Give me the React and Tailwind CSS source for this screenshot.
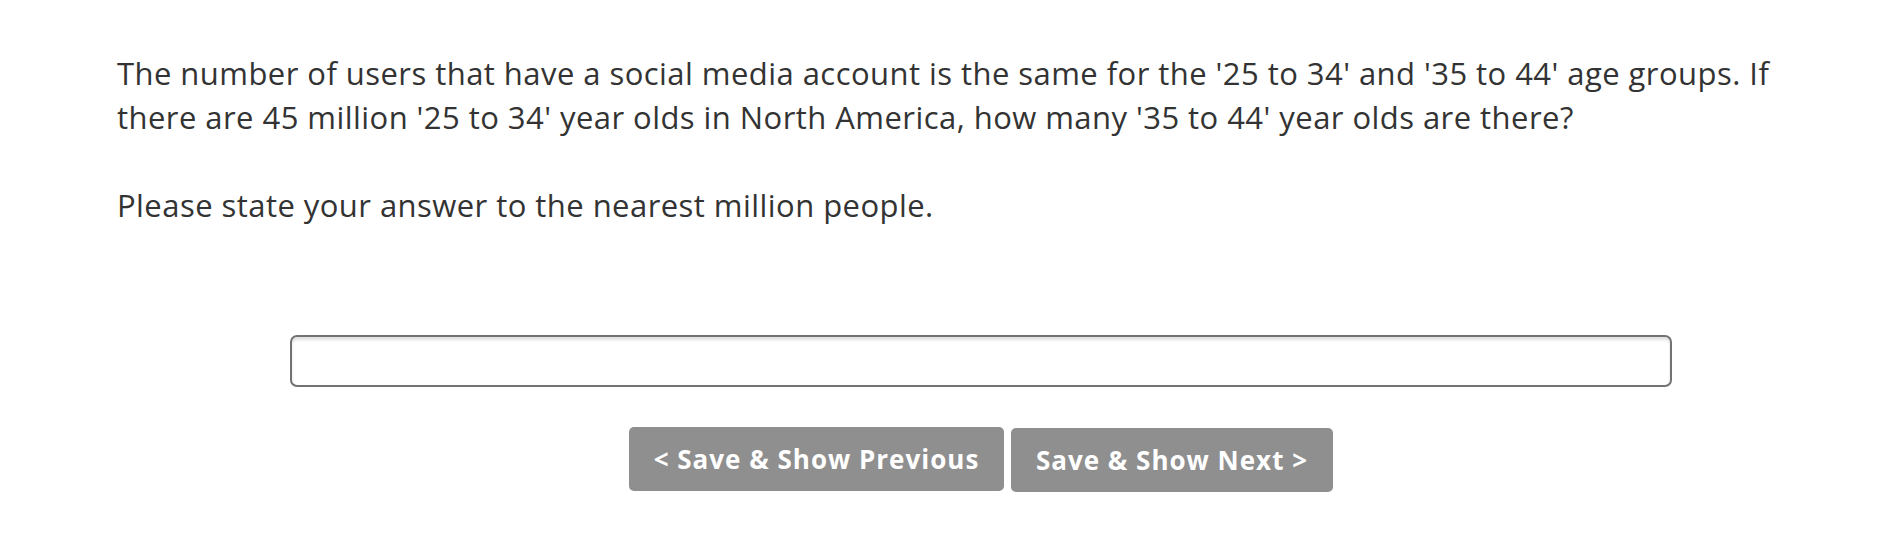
import React from 'react'

const App = () => {
    return (
        <div className="min-h-[550px] w-full bg-white font-['Open_Sans',sans-serif] text-[#333333]">
            <div className="w-[1728px] ml-[117px] pt-[51px]">
                <p className="text-[31px] leading-[44px] tracking-[0.45px]">
                    The number of users that have a social media account is the same for the '25 to 34' and '35 to 44' age groups. If there are 45 million '25 to 34' year olds in North America, how many '35 to 44' year olds are there?
                    <br />
                    <br />
                    Please state your answer to the nearest million people.
                </p>

                <div className="flex justify-center mt-[108px]">
                    <input
                        type="text"
                        className="w-4/5 h-[52px] rounded-[7px] border-2 border-[#727272] bg-white shadow-[inset_0_3px_3px_rgba(0,0,0,0.12)] outline-none px-3"
                    />
                </div>

                <div className="flex justify-center gap-[7px] mt-[40px]">
                    <button className="h-[64px] w-[375px] rounded-[5px] bg-[#8f8f8f] text-white text-[26px] font-bold tracking-[1px]">
                        &lt; Save &amp; Show Previous
                    </button>
                    <button className="h-[64px] w-[322px] rounded-[5px] bg-[#8f8f8f] text-white text-[26px] font-bold tracking-[1px] mt-px">
                        Save &amp; Show Next &gt;
                    </button>
                </div>
            </div>
        </div>
    )
}

export default App
